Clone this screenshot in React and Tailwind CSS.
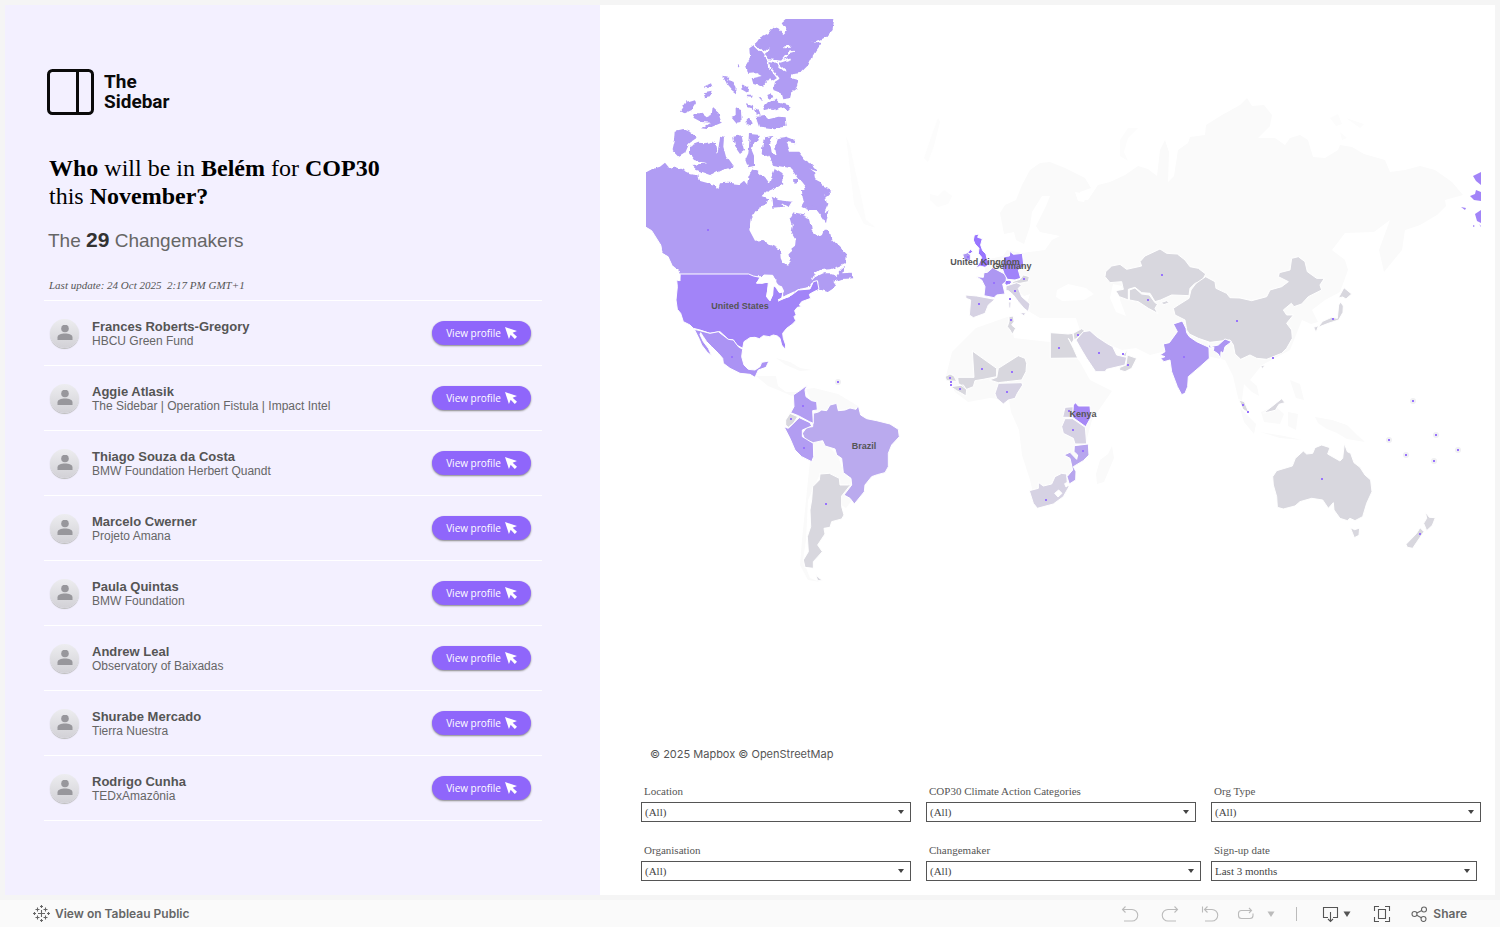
import { useState } from 'react'

const PEOPLE = [
  { name: 'Frances Roberts-Gregory', org: 'HBCU Green Fund' },
  { name: 'Aggie Atlasik', org: 'The Sidebar | Operation Fistula | Impact Intel' },
  { name: 'Thiago Souza da Costa', org: 'BMW Foundation Herbert Quandt' },
  { name: 'Marcelo Cwerner', org: 'Projeto Amana' },
  { name: 'Paula Quintas', org: 'BMW Foundation' },
  { name: 'Andrew Leal', org: 'Observatory of Baixadas' },
  { name: 'Shurabe Mercado', org: 'Tierra Nuestra' },
  { name: 'Rodrigo Cunha', org: 'TEDxAmazônia' },
]

const FILTERS = [
  { id: 'location', label: 'Location', value: '(All)', width: 'w-full' },
  { id: 'category', label: 'COP30 Climate Action Categories', value: '(All)', width: 'w-full' },
  { id: 'orgtype', label: 'Org Type', value: '(All)', width: 'w-full' },
  { id: 'organisation', label: 'Organisation', value: '(All)', width: 'w-full' },
  { id: 'changemaker', label: 'Changemaker', value: '(All)', width: 'w-[calc(100%+5px)]' },
  { id: 'signup', label: 'Sign-up date', value: 'Last 3 months', width: 'w-[calc(100%-4px)]' },
]

const GREY = '#d8d7de'
const LILAC_GREY = '#d6d2e3'
const BASE = '#fafafa'

// Land without any changemakers, in map units
const BASE_LAND = [
  'M1000 213L1005 205L1016 200L1022 185L1030 170L1040 163L1050 162L1065 168L1085 178L1091 188L1080 192L1078 200L1088 200L1098 185L1110 182L1125 175L1138 166L1148 169L1157 176L1160 150L1165 140L1169 152L1168 182L1174 176L1178 150L1188 143L1190 137L1205 135L1206 125L1222 115L1240 105L1247 98L1252 106L1264 105L1272 115L1270 126L1258 138L1275 138L1285 145L1290 138L1300 135L1308 140L1313 157L1325 158L1338 150L1340 145L1352 147L1364 154L1385 160L1390 172L1405 170L1420 166L1435 170L1452 182L1463 195L1445 200L1446 206L1437 215L1420 225L1405 230L1402 250L1384 272L1379 250L1390 220L1374 232L1345 233L1332 250L1345 260L1348 270L1340 292L1325 300L1312 310L1318 322L1311 324L1302 320L1290 350L1262 365L1250 380L1257 386L1259 396L1252 392L1244 384L1242 400L1246 412L1239 402L1233 376L1225 360L1180 350L1162 352L1150 355L1136 348L1122 350L1110 345L1080 330L1076 318L1040 318L1030 312L1026 306L1030 294L1024 296L1014 288L1002 282L985 288L985 260L1003 256L1007 250L1022 253L1045 250L1052 240L1060 236L1040 232L1036 226L1046 206L1050 196L1042 196L1032 212L1030 226L1024 244L1016 240L1014 232L1004 234Z',
  'M976 328L1010 316L1014 338L1050 342L1062 340L1080 362L1090 380L1112 391L1092 420L1085 445L1070 475L1036 505L1030 480L1022 455L1019 430L1011 412L1009 400L990 398L968 402L955 392L946 376L952 352Z',
  'M1112 446L1114 458L1104 482L1097 484L1096 474L1100 460L1108 454Z',
  'M756 376L776 376L778 386L786 392L798 392L792 396L778 390L768 386Z',
  'M776 358L790 362L800 368L812 370L800 371L786 365Z',
  'M806 389L814 388L838 394L858 406L852 412L834 409L816 412Z',
  'M812 442L824 442L838 456L844 474L852 480L848 492L852 500L846 508L840 504L842 492L838 478L820 474L808 500L806 540L803 560L810 578L820 582L808 580L800 565L802 540L804 520L808 480Z',
  'M1261 412L1275 406L1284 414L1280 424L1264 422Z M1288 412L1298 414L1296 430L1288 426Z M1240 408L1256 424L1254 434L1244 422Z M1260 432L1284 436L1302 440L1280 438Z',
  'M1315 417L1332 420L1347 425L1357 435L1365 442L1347 439L1337 433L1327 429L1318 423Z M1290 380L1300 384L1304 400L1296 398Z',
]

// Greenland coast, Iceland, Svalbard and the Russian Arctic islands
const FAINT_LAND = [
  'M846 136L850 146L856 174L862 200L866 220L876 228L864 224L854 204L850 170Z',
  'M938 118L940 122L934 146L928 162L924 158L930 140Z M930 194L938 196L944 190L952 196L948 204L938 207L930 200Z',
  'M1138 128L1128 138L1124 152L1128 161L1120 156L1120 140L1128 128Z M1330 118L1338 114L1342 124L1336 126Z M1346 118L1364 124L1360 128Z M1340 132L1347 138L1342 140Z',
]

const SEAS = [
  'M1057 290L1068 284L1086 288L1094 294L1084 300L1062 301L1056 297Z',
  'M1113 284L1122 286L1120 300L1126 316L1116 312L1110 298Z',
  'M1018 318L1050 322L1076 322L1076 332L1040 334L1014 330Z',
  'M1075 192L1087 194L1084 202L1078 201Z',
]

const CANADA = '#b09cf3'
const STATES = '#a284f8'
const PERU = '#b29df2'

// Each region is traced on a 3x grid that starts at its own origin
const REGIONS = [
  {
    id: 'arctic',
    x: 640,
    y: 10,
    rough: true,
    shapes: [
      [CANADA, 'M425 40L440 27L435 10L585 10L580 45L578 60L560 80L540 90L520 95L545 99L530 120L515 145L505 165L485 185L457 190L455 205L475 210L470 235L455 245L450 265L430 268L425 250L400 240L405 215L390 205L370 230L340 222L335 205L365 198L350 190L325 192L318 165L330 145L328 115L342 105L355 85L385 70L400 50L415 55L430 72L440 62Z'],
      [CANADA, 'M250 197L265 200L262 210L280 215L290 232L288 250L275 240L262 225L255 210Z M305 218L325 232L322 248L308 240Z M195 228L213 220L217 230L200 235Z M192 250L215 245L210 262L195 265Z M120 305L140 275L165 268L168 280L155 300L135 310Z'],
      [CANADA, 'M165 310L185 310L200 322L215 315L218 290L235 305L240 325L245 338L200 357L183 355L210 338L180 335L160 325Z M275 320L290 315L290 295L303 300L305 335L290 338Z M318 280L335 285L340 300L322 295Z M320 335L330 325L338 340L330 350L320 345Z M290 163L298 165L296 173Z M320 257L338 257L336 263L322 262Z M356 262L366 262L364 270Z M382 255L395 250L400 262L386 266Z'],
      [CANADA, 'M350 320L375 318L385 328L415 320L437 322L440 350L400 355L360 350Z M370 290L385 275L405 268L415 278L445 285L455 292L445 302L420 292L400 300L385 298L372 300Z M345 295L356 300L362 318L350 312Z'],
      [CANADA, 'M107 362L130 357L165 372L170 385L148 400L135 430L118 440L98 420L105 390Z M150 408L175 398L195 400L215 395L228 402L233 430L238 395L240 380L252 383L250 410L258 440L280 470L240 482L215 496L170 480L155 465L202 460L165 450L150 430Z M280 380L305 375L310 400L315 420L300 432L285 410Z M330 372L360 375L355 395L340 402L335 420L345 445L345 470L325 475L316 450L325 430Z'],
      [CANADA, 'M368 400L375 382L400 378L390 400L395 430L410 435L405 410L410 385L440 380L460 388L466 400L440 396L450 425L475 425L495 450L512 460L535 485L508 476L522 488L525 505L545 515L550 530L577 542L560 560L530 540L552 570L552 600L560 610L566 600L558 640L545 620L530 600L505 600L483 590L500 560L495 530L475 505L455 475L430 470L400 465L385 440L365 430Z'],
      [CANADA, 'M385 525L405 475L428 490L425 520L400 540Z M398 570L425 578L432 590L400 593Z M462 508L474 506L474 522L464 524Z'],
    ],
  },
  {
    id: 'canada',
    x: 640,
    y: 190,
    rough: true,
    shapes: [
      [CANADA, 'M0 -48L20 -54L35 -62L60 -70L75 -82L90 -64L110 -68L130 -60L150 -50L175 -47L178 -28L205 -20L228 -14L234 -2L240 -20L265 -22L300 -18L312 -28L322 -16L325 -40L335 -62L355 -55L375 -35L390 -15L405 -40L425 -40L430 -20L412 -10L390 -2L365 20L385 28L378 45L360 50L345 65L332 90L328 120L345 152L370 150L390 165L420 178L422 205L430 222L445 227L452 210L447 185L465 170L467 150L455 130L458 105L452 85L460 70L485 75L510 85L515 120L535 138L550 130L555 115L570 130L575 150L600 175L620 195L618 220L600 228L570 238L540 240L525 250L512 275L525 262L550 250L580 250L590 262L600 240L612 230L607 250L635 248L640 265L605 267L580 275L588 287L560 305L545 300L530 300L535 275L525 272L512 290L475 297L455 310L430 320L428 300L415 285L395 255L370 258L330 260L122 260L115 240L95 225L85 200L65 190L60 165L45 145L25 120L0 105Z'],
      [CANADA, 'M485 0L550 0L556 20L562 45L548 78L535 60L515 52L490 30Z M395 20L415 30L455 35L445 52L425 40L400 35Z'],
    ],
  },
  {
    id: 'united-states-mexico',
    x: 640,
    y: 190,
    shapes: [
      [STATES, 'M120 252L326 252L340 258L360 262L350 280L385 277L383 300L380 320L390 332L398 315L400 290L415 285L430 300L425 325L415 333L455 315L475 300L510 297L520 275L532 272L537 298L520 306L508 313L512 325L496 331L485 335L478 345L484 350L472 352L464 362L468 374L462 380L467 392L458 402L440 415L428 430L430 445L437 465L435 478L425 465L420 445L412 438L400 435L388 440L370 437L358 446L345 442L330 443L312 455L308 475L290 465L280 450L265 448L240 425L210 430L180 420L160 415L150 405L130 395L122 370L112 358L108 330L112 290L110 270L118 272Z'],
      ['#ab93f4', 'M163 418L180 422L210 430L235 425L265 448L280 450L295 470L308 478L305 500L312 525L325 538L345 540L360 530L365 517L387 513L378 532L355 540L345 562L330 553L300 550L270 535L250 520L248 505L235 490L215 470L200 455L190 440L182 428L180 434L190 455L205 475L215 497L202 487L185 465L178 448Z'],
      ['#fff', 'M350 278L372 255L398 256L408 275L400 280L380 276L366 280Z M385 290L398 284L396 312L390 332L380 320Z M402 284L425 290L430 306L418 308L410 296Z M414 330L440 316L462 306L448 320Z M18 112L35 122L62 165L66 190L84 200L96 226L120 255L120 272L100 240L60 205L42 165Z'],
    ],
  },
  {
    id: 'south-america',
    x: 770,
    y: 370,
    shapes: [
      ['#baaaee', 'M130 130L145 126L155 120L170 122L180 105L200 100L205 122L225 120L240 114L258 118L265 107L272 135L290 146L320 152L360 162L385 178L388 200L365 225L355 250L355 290L345 308L322 314L305 320L285 345L283 365L253 402L240 385L222 375L245 345L243 325L220 308L215 265L200 255L195 237L165 228L158 212L130 218L105 210L97 190L110 172L128 170Z'],
      [PERU, 'M70 75L95 58L112 45L105 60L108 80L125 92L140 95L142 120L128 122L130 160L118 155L85 137L62 128L72 110Z M42 170L55 175L75 155L88 143L120 158L125 168L97 180L97 200L130 220L131 260L125 275L95 260L75 240L60 205Z'],
      [GREY, 'M47 150L60 130L83 140L70 160L55 172L47 165Z M150 312L178 310L208 325L210 345L235 345L245 340L215 378L215 410L222 435L215 447L185 455L180 472L162 475L165 492L143 525L157 545L130 575L130 595L105 592L100 570L115 545L112 500L122 470L120 420L125 390L128 350L148 330Z M137 613L145 622L158 632L143 632Z'],
    ],
  },
  {
    id: 'europe',
    x: 930,
    y: 220,
    shapes: [
      ['#9875ff', 'M133 45L147 42L143 52L157 56L152 75L158 92L168 102L172 120L180 126L174 136L165 142L150 138L137 146L147 130L155 112L145 100L147 85L135 72L130 60Z M113 98L122 88L128 95L120 102Z'],
      ['#ad97f2', 'M98 103L113 98L122 105L122 120L105 126Z M138 170L160 172L162 158L172 157L188 143L230 165L228 188L218 192L225 222L200 225L192 233L162 227L165 200L155 180Z'],
      ['#a083fa', 'M222 110L238 108L240 94L250 103L277 100L282 140L265 150L272 175L255 180L232 178L222 160L215 140Z M223 188L237 180L246 185L240 193L228 196Z'],
      [GREY, 'M245 186L270 178L280 165L298 170L295 185L270 190L250 190Z M237 290L250 288L252 305L245 315L257 325L247 343L240 330L232 320L237 305Z'],
      [LILAC_GREY, 'M228 198L260 188L275 195L265 205L275 230L300 252L295 275L282 265L265 245L250 225L235 212L228 212Z M270 278L287 278L282 288Z M236 246L243 246L242 264L237 264Z M107 225L140 228L195 238L175 255L165 280L130 293L118 285L122 240L108 235Z'],
    ],
  },
  {
    id: 'africa',
    x: 930,
    y: 330,
    shapes: [
      [GREY, 'M127 63L200 115L200 140L160 148L135 152L130 170L110 178L85 160L83 142L132 142Z M205 115L265 77L285 85L290 100L288 125L275 150L230 155L205 158L178 150L200 142Z M361 8L390 10L415 12L428 10L432 28L425 40L415 25L430 55L443 84L361 85Z M432 30L430 10L455 -4L465 3L440 25Z M565 72L580 75L592 60L588 80Z M592 75L620 85L605 115L585 125L568 120L570 112L588 105Z M45 140L60 132L72 138L80 154L50 152Z M62 170L100 165L110 180L108 198L95 190L80 182Z'],
      [LILAC_GREY, 'M205 160L275 158L278 165L262 190L255 205L235 210L220 222L200 205L195 190Z M438 30L460 5L480 2L500 20L530 40L548 50L560 75L590 82L585 105L530 118L525 125L497 125L470 85L455 60Z M398 262L405 232L430 230L430 262Z M405 266L428 266L466 292L470 342L435 342L430 325L400 310L395 290Z M298 482L325 475L325 457L340 468L365 462L375 440L395 430L410 432L412 460L417 470L400 500L370 522L322 535L310 520Z'],
      ['#a688f6', 'M430 225L437 218L445 228L480 228L483 262L467 290L428 262Z'],
      ['#b8a6ee', 'M433 347L475 342L477 375L460 392L430 410L438 425L437 450L418 462L411 440L428 420L420 385L402 375L420 367L440 388L443 375L432 365Z'],
      ['#fff', 'M374 490L386 480L396 490L384 501Z M404 461L411 458L415 466L408 471Z'],
    ],
  },
  {
    id: 'asia',
    x: 1090,
    y: 230,
    shapes: [
      [GREY, 'M47 125L65 108L90 103L110 118L155 108L150 95L165 78L210 57L230 70L262 72L285 90L300 110L325 115L347 132L335 155L315 160L300 175L297 197L245 195L212 210L195 215L180 190L155 188L135 172L115 178L115 210L88 200L77 182L100 178L95 155L60 158L45 140Z M118 180L135 174L155 192L178 195L195 218L203 222L195 235L203 250L175 235L145 215L118 210Z M212 218L230 212L238 218L222 224Z'],
      [GREY, 'M250 235L265 225L297 205L303 180L318 160L347 140L375 155L378 175L410 190L420 203L450 204L485 212L530 200L540 180L575 170L595 155L565 140L568 128L600 120L605 85L625 80L645 95L652 125L680 145L703 145L690 165L695 180L675 190L655 200L635 222L612 230L604 220L580 240L590 255L610 255L590 280L605 300L607 325L590 355L575 370L530 388L500 385L480 375L452 388L435 372L430 345L420 330L360 337L325 325L298 312L290 300L285 270L255 255Z M512 408L525 405L518 416Z'],
      ['#ac95f2', 'M250 282L277 273L288 295L290 308L298 320L320 335L357 352L358 385L330 410L295 440L293 470L285 490L275 494L262 470L245 425L240 390L222 395L212 385L225 380L210 375L225 365L220 342L238 338L262 305Z M355 338L362 350L385 345L405 327L425 335L405 350L400 370L393 365L392 387L385 372L370 362L372 352L357 354Z'],
      [GREY, 'M742 265L746 225L752 216L760 228L759 247L746 270L715 280L684 292L698 274L725 262Z M745 204L762 173L785 192L768 207L758 201Z M671 292L686 287L678 307Z M447 510L463 515L477 549L459 538Z M520 549L545 530L560 518L575 506L585 518L567 523L556 541L535 546Z'],
    ],
  },
  {
    id: 'oceania',
    x: 1260,
    y: 380,
    shapes: [
      [GREY, 'M38 290L50 272L97 258L106 235L130 213L140 222L158 220L165 203L185 195L210 203L203 222L240 243L248 235L253 190L262 215L272 220L282 248L300 262L315 285L332 300L336 335L320 370L308 410L285 422L270 415L262 422L240 415L222 390L220 368L205 385L188 360L155 355L120 365L105 378L70 387L52 382L50 350L40 315Z M271 443L284 449L299 444L297 466L283 473Z M496 396L508 412L526 413L517 436L500 452L491 430L500 415Z M438 493L470 460L480 443L492 455L470 487L458 505L442 502Z'],
    ],
  },
]

const DOTS = [
  [708, 230], [732, 357], [739, 306], [803, 406], [791, 419], [804, 448], [826, 504],
  [968, 257], [994, 283], [979, 304], [1007, 282], [1015, 291], [1024, 279], [1011, 320], [1010, 299],
  [982, 369], [1012, 372], [1007, 392], [950, 378], [951, 382], [951, 385], [960, 389],
  [1059, 348], [1078, 335], [1099, 353], [1123, 354], [1128, 365], [1069, 411], [1073, 430], [1083, 451], [1046, 500],
  [1162, 275], [1148, 300], [1237, 321], [1184, 357], [1273, 358], [1333, 319], [1243, 405], [1248, 412],
  [1322, 479], [1420, 534],
]

const ISLAND_DOTS = [
  [838, 382], [1413, 401], [1389, 440], [1436, 435], [1458, 450], [1406, 455], [1434, 461],
]

const LABELS = [
  { text: 'United States', x: 740, y: 309 },
  { text: 'Brazil', x: 864, y: 449 },
  { text: 'United Kingdom', x: 985, y: 265 },
  { text: 'Germany', x: 1012, y: 269 },
  { text: 'Kenya', x: 1083, y: 417 },
]

function WorldMap() {
  return (
    <svg viewBox="646 19 835 720" className="block w-full" role="img" aria-label="Changemakers by country">
      <defs>
        <filter id="coast" x="-5%" y="-5%" width="110%" height="110%">
          <feTurbulence type="fractalNoise" baseFrequency="0.05" numOctaves="2" seed="4" />
          <feDisplacementMap in="SourceGraphic" scale="14" xChannelSelector="R" yChannelSelector="G" />
        </filter>
      </defs>
      {BASE_LAND.map((d) => (
        <path key={d} d={d} fill={BASE} />
      ))}
      {FAINT_LAND.map((d) => (
        <path key={d} d={d} fill="#fcfcfc" />
      ))}
      {SEAS.map((d) => (
        <path key={d} d={d} fill="#fff" />
      ))}
      {REGIONS.map((r) => (
        <g
          key={r.id}
          transform={`translate(${r.x} ${r.y}) scale(0.33333)`}
          filter={r.rough ? 'url(#coast)' : undefined}
          stroke={r.rough ? 'none' : '#fff'}
          strokeWidth="3"
          strokeLinejoin="round"
        >
          {r.shapes.map(([fill, d]) => (
            <path key={d} d={d} fill={fill} />
          ))}
          {r.id === 'arctic' && (
            <path
              d="M342 102L365 125L385 150L425 155L445 130L462 125M425 155L455 145M390 115L372 130M385 150L388 180M400 150L420 170L438 185M395 180L415 205L385 225M455 110L430 112"
              fill="none"
              stroke="#fff"
              strokeWidth="6"
            />
          )}
        </g>
      ))}
      {/* western tip of Alaska, past the date line */}
      <path
        d="M1473 176L1481 172V185L1476 181Z M1470 196L1475 194L1476 190L1481 192V201L1474 200Z M1475 214L1481 210V223L1477 221Z M1461 207L1466 208L1465 210Z M1473 225L1475 226L1473 227Z M1479 224L1481 226V227Z"
        fill={STATES}
      />
      {ISLAND_DOTS.map(([x, y]) => (
        <circle key={`${x}-${y}`} cx={x} cy={y} r="3" fill="#f0f0f2" />
      ))}
      {DOTS.concat(ISLAND_DOTS).map(([x, y]) => (
        <rect key={`${x}-${y}`} x={x - 1} y={y - 1} width="2" height="2" fill="#9873fd" />
      ))}
      {LABELS.map((l) => (
        <text
          key={l.text}
          x={l.x}
          y={l.y}
          textAnchor="middle"
          className="fill-[#555] font-['Liberation_Sans',sans-serif] text-[9px] font-bold"
        >
          {l.text}
        </text>
      ))}
    </svg>
  )
}

function Logo() {
  return (
    <div className="flex items-center gap-[9px]">
      <svg className="h-[48px] w-[48px]" viewBox="0 0 48 48" fill="none" stroke="#0a0a0a" strokeWidth="3">
        <rect x="1.5" y="2.5" width="44" height="43" rx="4" />
        <path d="M30.5 2.5v43" />
      </svg>
      <p className="font-['Roboto',sans-serif] text-[19px] leading-[20px] font-bold text-[#0a0a0a]">
        <span className="block">The</span>
        <span className="block">Sidebar</span>
      </p>
    </div>
  )
}

function PersonRow({ person }) {
  return (
    <li className="flex h-[65px] items-center border-b border-white pr-[11px] pl-[6px]">
      <span className="flex h-[29px] w-[29px] shrink-0 items-center justify-center rounded-full bg-linear-to-b from-[#ededf0] to-[#d2d1d6] shadow-[0_1px_1px_#bbb]">
        <svg className="h-[16px] w-[16px]" viewBox="0 0 16 16" fill="#98979c">
          <circle cx="8" cy="3.500" r="3.800" />
          <path d="M0.500 15V12.500C0.500 9.500 4 8.500 8 8.500S15.500 9.500 15.500 12.500V15Z" />
        </svg>
      </span>
      <div className="ml-[13px] flex-1">
        <p className="text-[13px] leading-[15px] font-bold text-[#555]">{person.name}</p>
        <p className="text-[12px] leading-[14px] text-[#666]">{person.org}</p>
      </div>
      <button className="flex h-[24px] w-[99px] items-center justify-center gap-[4px] rounded-full bg-[#8f66fb] font-['Open_Sans',sans-serif] text-[10px] text-white shadow-[0_1px_2px_#888]">
        View profile
        <svg className="h-[12px] w-[12px]" viewBox="0 0 11 11" fill="#fff">
          <path d="M0 0L11 3.600L7 5.200L11 9L9 11L5.200 7.200L3.600 11Z" />
        </svg>
      </button>
    </li>
  )
}

function Filter({ filter }) {
  return (
    <div className="flex flex-col">
      <label htmlFor={filter.id} className="pl-[3px] text-[11px] leading-[14px] text-[#555]">
        {filter.label}
      </label>
      <div className={`relative mt-[4px] ${filter.width}`}>
        <select
          id={filter.id}
          className="block h-[20px] w-full appearance-none border border-[#555] bg-white pl-[3px] text-[11px] leading-[18px] text-[#444]"
        >
          <option>{filter.value}</option>
        </select>
        <svg
          className="pointer-events-none absolute top-[8px] right-[7px] h-[4px] w-[6px]"
          viewBox="0 0 6 4"
          fill="#444"
        >
          <path d="M0 0H6L3 4Z" />
        </svg>
      </div>
    </div>
  )
}

function ToolbarButton({ label, children, muted, width = 'w-[18px]' }) {
  return (
    <button aria-label={label} className={`flex h-[18px] items-center ${width} ${muted ? 'text-[#bbb]' : 'text-[#555]'}`}>
      {children}
    </button>
  )
}

function Icon({ children, className = 'h-[18px] w-[18px]', box = '0 0 18 18' }) {
  return (
    <svg className={className} viewBox={box} fill="none" stroke="currentColor" strokeWidth="1.1">
      {children}
    </svg>
  )
}

function Toolbar() {
  return (
    <footer className="flex h-[27px] items-center justify-between bg-[#fafafa] px-[33px] font-['Inter',sans-serif] text-[12px] font-semibold text-[#666]">
      <a href="#tableau" className="flex items-center gap-[5px]">
        <Icon className="h-[17px] w-[17px]" box="0 0 17 17">
          <path d="M8.5 5v7M5 8.5h7M8.5 0v3M7 1.5h3M8.5 14v3M7 15.5h3M1.5 7v3M0 8.5h3M15.5 7v3M14 8.5h3M4.5 2.5v4M2.5 4.5h4M12.5 2.5v4M10.5 4.5h4M4.5 10.5v4M2.5 12.5h4M12.5 10.5v4M10.5 12.5h4" />
        </Icon>
        View on Tableau Public
      </a>
      <div className="flex items-center">
        <div className="flex items-center gap-[22px]">
          <ToolbarButton label="Undo" muted>
            <Icon>
              <path d="M4.500 1.500L1.500 4.500L4.500 7.500M1.500 4.500H11A5.500 5.500 0 0 1 11 16H3" />
            </Icon>
          </ToolbarButton>
          <ToolbarButton label="Redo" muted>
            <Icon>
              <path d="M13.500 1.500L16.500 4.500L13.500 7.500M16.500 4.500H7A5.500 5.500 0 0 0 7 16H15" />
            </Icon>
          </ToolbarButton>
          <ToolbarButton label="Revert" muted>
            <Icon>
              <path d="M1.500 1.500V7.500M6.500 1.500L3.500 4.500L6.500 7.500M3.500 4.500H11A5.500 5.500 0 0 1 11 16H4" />
            </Icon>
          </ToolbarButton>
        </div>
        <ToolbarButton label="Refresh" muted width="ml-[18px] w-[38px] gap-[12px]">
          <Icon>
            <path d="M14 5.500H4.500A3 3 0 0 0 1.500 8.500V10.500A3 3 0 0 0 4.500 13.500H13A3 3 0 0 0 16 10.500V8.500M12 3L14.500 5.500L12 8" />
          </Icon>
          <svg className="h-[6px] w-[8px] shrink-0" viewBox="0 0 8 6" fill="currentColor">
            <path d="M0.500 0.500H7.500L4 6Z" />
          </svg>
        </ToolbarButton>
        <span className="ml-[21px] h-[14px] w-px bg-[#bbb]" />
        <ToolbarButton label="Download" width="ml-[25px] w-[29px] gap-[3px]">
          <Icon>
            <path d="M6 12.500H1.500V2.500H15.500V12.500H11M8.500 7V16.500M6 14L8.500 16.500L11 14" />
          </Icon>
          <svg className="h-[6px] w-[8px]" viewBox="0 0 8 6" fill="currentColor">
            <path d="M0.500 0.500H7.500L4 6Z" />
          </svg>
        </ToolbarButton>
        <ToolbarButton label="Full Screen" width="ml-[22px] w-[18px]">
          <Icon>
            <path d="M5.500 4.500H12.500V13.500H5.500ZM1.500 6V1.500H6M12 1.500H16.500V6M16.500 12V16.500H12M6 16.500H1.500V12" />
          </Icon>
        </ToolbarButton>
        <button className="ml-[20px] flex items-center gap-[5px]">
          <Icon className="h-[16px] w-[17px]" box="0 0 17 16">
            <circle cx="3.500" cy="8" r="2.500" />
            <circle cx="13" cy="3.500" r="2.500" />
            <circle cx="12.500" cy="13" r="2.500" />
            <path d="M5.800 7L10.800 4.500M5.800 9.200L10.300 11.800" />
          </Icon>
          Share
        </button>
      </div>
    </footer>
  )
}

export default function App() {
  const [filters] = useState(FILTERS)

  return (
    <div className="flex min-h-screen flex-col bg-[#f5f5f5] font-['Liberation_Sans',Arial,sans-serif]">
      <main className="flex flex-1 p-[5px]">
        <section className="w-[595px] shrink-0 bg-[#f3f0ff] pt-[63px] pr-[58px] pl-[39px]">
          <div className="pl-[3px]">
            <Logo />
            <h1 className="mt-[38px] pl-[2px] font-['Liberation_Serif',serif] text-[24px] leading-[28px] text-black">
              <b>Who</b> will be in <b>Belém</b> for <b>COP30</b>
              <br />
              this <b>November?</b>
            </h1>
            <p className="mt-[18px] pl-px text-[19px] leading-[24px] text-[#666]">
              The <b className="text-[21px] text-[#333]">29</b> Changemakers
            </p>
            <p className="mt-[24px] pl-[2px] font-['Liberation_Serif',serif] text-[11px] leading-[16px] text-[#555] italic">
              Last update: 24 Oct 2025 &nbsp;2:17 PM GMT+1
            </p>
          </div>
          <ul className="mt-[7px] border-t border-white">
            {PEOPLE.map((p) => (
              <PersonRow key={p.name} person={p} />
            ))}
          </ul>
        </section>

        <section className="flex-1 bg-white pt-[14px] pr-[14px] pb-[14px] pl-[41px]">
          <div className="pl-[5px]">
            <WorldMap />
            <p className="mt-[8px] pl-[4px] font-['Inter',sans-serif] text-[11px] leading-[14px] text-[#555]">
              © 2025 Mapbox © OpenStreetMap
            </p>
          </div>
          <div className="mt-[23px] grid grid-cols-3 gap-x-[15px] gap-y-[21px] font-['Liberation_Serif',serif]">
            {filters.map((f) => (
              <Filter key={f.id} filter={f} />
            ))}
          </div>
        </section>
      </main>
      <Toolbar />
    </div>
  )
}
